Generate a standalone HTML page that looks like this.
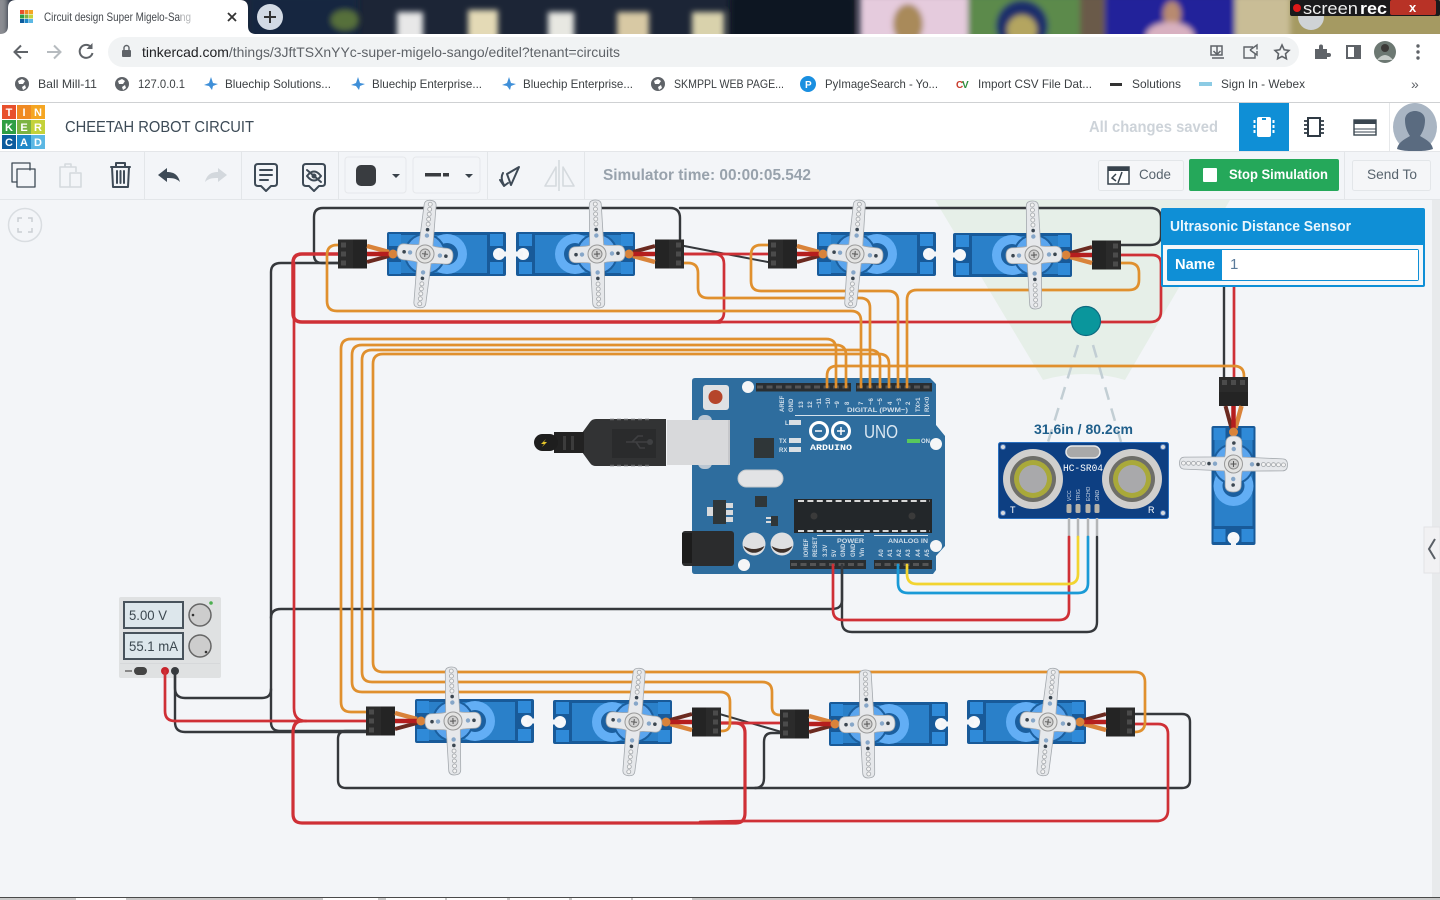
<!DOCTYPE html>
<html lang="en"><head><meta charset="utf-8"><title>Circuit design Super Migelo-Sango</title>
<style>
html,body{margin:0;padding:0;background:#f3f5f8;width:1440px;height:900px;overflow:hidden}
svg{display:block;font-family:"Liberation Sans",sans-serif}
.w{fill:none;stroke-linecap:round;stroke-linejoin:round}
.k{stroke:#35383c;stroke-width:2.4}
.r{stroke:#cf3036;stroke-width:2.7}
.o{stroke:#e0902e;stroke-width:2.7}
.ic{fill:none;stroke:#3e4a56;stroke-width:2;stroke-linejoin:round;stroke-linecap:round}
.lt{fill:none;stroke:#d5dade;stroke-width:1.6;stroke-linejoin:round}
.bm{font-size:12px;fill:#3c4043}
.pl{font-size:6px;fill:#cfdde9;font-weight:bold}
</style></head><body>
<svg width="1440" height="900" viewBox="0 0 1440 900" xmlns="http://www.w3.org/2000/svg">
<defs>
<filter id="bl" x="-30%" y="-30%" width="160%" height="160%"><feGaussianBlur stdDeviation="3"/></filter>
<clipPath id="topclip"><rect x="0" y="0" width="1440" height="34"/></clipPath>
<g id="conn">
  <rect x="-87" y="-14.5" width="29" height="29" fill="#2b2b2b"/>
  <rect x="-72" y="-14.5" width="14" height="29" fill="#242424"/>
  <rect x="-84" y="-11.500" width="5" height="5" fill="#4b4b4b"/>
  <rect x="-84" y="-2.500" width="5" height="5" fill="#4b4b4b"/>
  <rect x="-84" y="6.500" width="5" height="5" fill="#4b4b4b"/>
</g>
<g id="sb">
  <rect x="-38" y="-22" width="119" height="44" rx="2" fill="#185a99"/>
  <rect x="-24" y="-19" width="86" height="38" fill="#2a80c9"/>
  <circle cx="22" cy="0" r="20" fill="#62aef5"/>
  <circle cx="22" cy="0" r="11" fill="#1b5f9f"/>
  <circle cx="0" cy="0" r="21" fill="#1b5f9f"/>
  <circle cx="0" cy="0" r="19" fill="#5ba5ee"/>
  <rect x="-36" y="-20" width="12" height="12" fill="#2f8ad8"/>
  <rect x="-36" y="8" width="12" height="12" fill="#2f8ad8"/>
  <rect x="65" y="-20" width="13" height="12" fill="#2f8ad8"/>
  <rect x="65" y="8" width="13" height="12" fill="#2f8ad8"/>
  <circle cx="74" cy="0" r="6" fill="#f7f8fa"/>
  <rect x="74" y="-2.5" width="8" height="5" fill="#f3f5f8"/>
  <path d="M-58 -8 L-36 -2" stroke="#d9833a" stroke-width="4.500" fill="none"/>
  <path d="M-58 8 L-36 2" stroke="#6b2a20" stroke-width="4" fill="none"/>
  <path d="M-58 0 H-22" stroke="#b51e1e" stroke-width="4.500" fill="none"/>
  <circle cx="-32" cy="0" r="4.500" fill="#d9833a"/>
</g>
<g id="hn">
  <path d="M-7 -9 L-6 -49 Q-6 -54 0 -54 Q6 -54 6 -49 L7 -9 Q9 -8 21 -8 Q28 -8 28 0 Q28 8 21 8 Q9 8 7 9 L6 49 Q6 54 0 54 Q-6 54 -6 49 L-7 9 Q-9 8 -21 8 Q-28 8 -28 0 Q-28 -8 -21 -8 Q-9 -8 -7 -9Z" fill="#e6e8eb" stroke="#a4a9ae" stroke-width=".8"/>
  <g fill="#f2f2f2" stroke="#a2a6aa" stroke-width=".8">
    <circle cy="-50" r="2"/><circle cy="-45" r="2"/><circle cy="-40" r="2"/><circle cy="-35" r="2"/><circle cy="-30" r="2"/>
    <circle cy="50" r="2"/><circle cy="45" r="2"/><circle cy="40" r="2"/><circle cy="35" r="2"/><circle cy="30" r="2"/>
  </g>
  <circle cy="-24.5" r="1.800" fill="#3b4650"/><circle cy="-18.5" r="2.200" fill="#86a6c8"/>
  <circle cy="24.5" r="1.800" fill="#3b4650"/><circle cy="18.5" r="2.200" fill="#86a6c8"/>
  <circle cx="-21" r="1.800" fill="#3b4650"/><circle cx="-15" r="2.200" fill="#86a6c8"/>
  <circle cx="21" r="1.800" fill="#3b4650"/><circle cx="15" r="2.200" fill="#86a6c8"/>
  <circle r="9" fill="#e3e3e2" stroke="#999" stroke-width="1"/>
  <circle r="5" fill="#cfcfcf" stroke="#888" stroke-width="1"/>
  <path d="M-3 0H3M0 -3V3" stroke="#555" stroke-width="1"/>
</g>
</defs>

<!-- browser chrome -->
<rect width="1440" height="34" fill="#1c2536"/>
<g clip-path="url(#topclip)">
  <g filter="url(#bl)">
    <rect x="-6" y="-5" width="14" height="45" fill="#8b8d92"/>
    <rect x="248" y="-5" width="110" height="45" fill="#19263f"/>
    <ellipse cx="345" cy="20" rx="14" ry="10" fill="#56703a"/>
    <rect x="397" y="12" width="26" height="30" fill="#e8e8e8"/>
    <rect x="468" y="10" width="30" height="30" fill="#e4dab6"/>
    <rect x="548" y="12" width="26" height="30" fill="#e8e8e2"/>
    <rect x="617" y="12" width="32" height="30" fill="#d8c9a4"/>
    <rect x="692" y="12" width="32" height="30" fill="#d9d2ac"/>
    <rect x="730" y="-5" width="125" height="45" fill="#0e1522"/>
    <rect x="860" y="-5" width="110" height="45" fill="#e5cbdd"/>
    <ellipse cx="908" cy="24" rx="15" ry="20" fill="#a98a5a"/>
    <rect x="968" y="-5" width="112" height="45" fill="#5c8a4c"/>
    <circle cx="1022" cy="26" r="26" fill="#1f2d6a"/>
    <circle cx="1022" cy="30" r="15" fill="#b4a560"/>
    <rect x="1080" y="-5" width="28" height="45" fill="#6b5a4a"/>
    <rect x="1105" y="-5" width="130" height="45" fill="#20209a"/>
    <ellipse cx="1172" cy="14" rx="9" ry="13" fill="#b88a70"/>
    <ellipse cx="1170" cy="36" rx="24" ry="14" fill="#d8b0c0"/>
    <rect x="1235" y="-5" width="60" height="45" fill="#c9bd96"/>
    <rect x="1290" y="-5" width="160" height="45" fill="#a59a62"/>
  </g>
</g>
<circle cx="270" cy="17" r="13" fill="#d3dae4"/>
<path d="M264 17H276M270 11V23" stroke="#333" stroke-width="2"/>
<circle cx="1311" cy="17" r="13" fill="#cfd3d6"/>
<path d="M0 34 Q8 34 8 26 V8 Q8 0 16 0 H240 Q248 0 248 8 V26 Q248 34 256 34Z" fill="#fff"/>
<g>
 <rect x="20" y="10" width="4" height="4" fill="#e8502c"/><rect x="24.500" y="10" width="4" height="4" fill="#f08a22"/><rect x="29" y="10" width="4" height="4" fill="#f5a623"/>
 <rect x="20" y="14.500" width="4" height="4" fill="#2f9e44"/><rect x="24.500" y="14.500" width="4" height="4" fill="#7cb342"/><rect x="29" y="14.500" width="4" height="4" fill="#c4d23a"/>
 <rect x="20" y="19" width="4" height="4" fill="#0b5c9e"/><rect x="24.500" y="19" width="4" height="4" fill="#1e88c8"/><rect x="29" y="19" width="4" height="4" fill="#5cb8e4"/>
</g>
<text x="44" y="21" font-size="12" fill="#45494e" textLength="147" lengthAdjust="spacingAndGlyphs">Circuit design Super Migelo-Sang</text>
<rect x="181" y="6" width="14" height="22" fill="#fff" opacity=".6"/>
<path d="M228 13L236 21M236 13L228 21" stroke="#333" stroke-width="1.800"/>
<!-- screenrec -->
<rect x="1290" y="0" width="150" height="16" fill="#1a1a1c" rx="2"/>
<circle cx="1297" cy="8" r="4" fill="#e01818"/>
<text x="1303" y="14" font-size="17" fill="#eee" textLength="55" lengthAdjust="spacingAndGlyphs">screen</text>
<text x="1360" y="14" font-size="17" font-weight="bold" fill="#fff" textLength="27" lengthAdjust="spacingAndGlyphs">rec</text>
<rect x="1390" y="0" width="46" height="15" fill="#b83226" rx="2"/>
<text x="1409" y="12" font-size="13" font-weight="bold" fill="#fff">x</text>

<rect y="34" width="1440" height="36" fill="#fff"/>
<path d="M28 52H15M21 45.500L14.500 52L21 58.500" fill="none" stroke="#5f6368" stroke-width="2"/>
<path d="M47 52H60M54 45.500L60.500 52L54 58.500" fill="none" stroke="#b6bbbf" stroke-width="2"/>
<path d="M91 47A6.500 6.500 0 1 0 92.500 53" fill="none" stroke="#5f6368" stroke-width="2"/><path d="M92.500 43V49H86.500Z" fill="#5f6368"/>
<rect x="108" y="37" width="1191" height="30" rx="15" fill="#f1f3f4"/>
<rect x="122" y="50" width="9" height="7" rx="1" fill="#5f6368"/><path d="M124 50V48A2.500 2.500 0 0 1 129 48V50" fill="none" stroke="#5f6368" stroke-width="1.400"/>
<text x="142" y="57" font-size="14" fill="#202124" textLength="478" lengthAdjust="spacingAndGlyphs"><tspan>tinkercad.com</tspan><tspan fill="#5f6368">/things/3JftTSXnYYc-super-migelo-sango/editel?tenant=circuits</tspan></text>
<path d="M1211 46H1222V55H1211ZM1217 46V54M1213.500 51L1217 54.500L1220.500 51M1212 58H1224" fill="none" stroke="#5f6368" stroke-width="1.500"/>
<path d="M1250 50L1257 45V49.500M1250 50L1257 55V51M1253 47H1244V58H1255V54" fill="none" stroke="#5f6368" stroke-width="1.400"/>
<path d="M1282 45L1284.200 49.800L1289 50.400L1285.500 53.800L1286.400 58.800L1282 56.400L1277.600 58.800L1278.500 53.800L1275 50.400L1279.800 49.800Z" fill="none" stroke="#5f6368" stroke-width="1.600"/>
<path d="M1315 49H1319V46.500A2 2 0 0 1 1323 46.500V49H1327V53H1329A2 2 0 0 1 1329 57H1327V59H1315Z" fill="#5f6368"/>
<rect x="1347" y="46" width="13" height="12" fill="none" stroke="#5f6368" stroke-width="2"/><rect x="1354" y="46" width="6" height="12" fill="#5f6368"/>
<circle cx="1385" cy="52" r="11" fill="#6c7872"/><circle cx="1385" cy="48" r="4" fill="#3c3a38"/><path d="M1377 60Q1385 50 1393 60Z" fill="#c7cdc9"/>
<circle cx="1418" cy="46" r="1.700" fill="#5f6368"/><circle cx="1418" cy="52" r="1.700" fill="#5f6368"/><circle cx="1418" cy="58" r="1.700" fill="#5f6368"/>

<rect y="70" width="1440" height="32" fill="#fff"/><rect y="102" width="1440" height="1" fill="#cfd1d3"/>
<g fill="#5f6368"><circle cx="22" cy="84" r="7"/><circle cx="122" cy="84" r="7"/><circle cx="658" cy="84" r="7"/></g>
<g fill="#fff"><path d="M18 81L22 79L25 81L23 84L19 84ZM22 87L25 85L26 88L23 90Z"/><path d="M118 81L122 79L125 81L123 84L119 84ZM122 87L125 85L126 88L123 90Z"/><path d="M654 81L658 79L661 81L659 84L655 84ZM658 87L661 85L662 88L659 90Z"/></g>
<g fill="#3f8fd8"><path d="M211 77L213 83L218 84L213 86L212 90L209 86L204 85L209 83Z"/><path d="M358 77L360 83L365 84L360 86L359 90L356 86L351 85L356 83Z"/><path d="M509 77L511 83L516 84L511 86L510 90L507 86L502 85L507 83Z"/></g>
<circle cx="808" cy="84" r="8" fill="#1a8fe0"/><text x="805" y="88" font-size="10" font-weight="bold" fill="#fff">P</text>
<text x="956" y="88" font-size="10" font-weight="bold" fill="#c83c2c">C</text><text x="962" y="88" font-size="10" font-weight="bold" fill="#2f8f3f">V</text>
<rect x="1110" y="83" width="12" height="3" fill="#333"/>
<rect x="1199" y="82" width="13" height="4" fill="#8ccbe4"/>
<text class="bm" x="38" y="88" textLength="59" lengthAdjust="spacingAndGlyphs">Ball Mill-11</text>
<text class="bm" x="138" y="88" textLength="47" lengthAdjust="spacingAndGlyphs">127.0.0.1</text>
<text class="bm" x="225" y="88" textLength="106" lengthAdjust="spacingAndGlyphs">Bluechip Solutions...</text>
<text class="bm" x="372" y="88" textLength="110" lengthAdjust="spacingAndGlyphs">Bluechip Enterprise...</text>
<text class="bm" x="523" y="88" textLength="110" lengthAdjust="spacingAndGlyphs">Bluechip Enterprise...</text>
<text class="bm" x="674" y="88" textLength="110" lengthAdjust="spacingAndGlyphs">SKMPPL WEB PAGE...</text>
<text class="bm" x="825" y="88" textLength="113" lengthAdjust="spacingAndGlyphs">PyImageSearch - Yo...</text>
<text class="bm" x="978" y="88" textLength="114" lengthAdjust="spacingAndGlyphs">Import CSV File Dat...</text>
<text class="bm" x="1132" y="88" textLength="49" lengthAdjust="spacingAndGlyphs">Solutions</text>
<text class="bm" x="1221" y="88" textLength="84" lengthAdjust="spacingAndGlyphs">Sign In - Webex</text>
<text x="1411" y="89" font-size="14" fill="#5f6368">»</text>

<!-- Tinkercad header -->
<rect y="103" width="1440" height="48" fill="#fff"/>
<g font-size="11" font-weight="bold" fill="#fff" text-anchor="middle">
 <rect x="2" y="105" width="14" height="14" fill="#e8502c"/><text x="9" y="116">T</text>
 <rect x="17" y="105" width="14" height="14" fill="#f08a22"/><text x="24" y="116">I</text>
 <rect x="31" y="105" width="14" height="14" fill="#f5a623"/><text x="38" y="116">N</text>
 <rect x="2" y="120" width="14" height="14" fill="#2f9e44"/><text x="9" y="131">K</text>
 <rect x="17" y="120" width="14" height="14" fill="#7cb342"/><text x="24" y="131">E</text>
 <rect x="31" y="120" width="14" height="14" fill="#c4d23a"/><text x="38" y="131">R</text>
 <rect x="2" y="135" width="14" height="14" fill="#0b5c9e"/><text x="9" y="146">C</text>
 <rect x="17" y="135" width="14" height="14" fill="#1e88c8"/><text x="24" y="146">A</text>
 <rect x="31" y="135" width="14" height="14" fill="#5cb8e4"/><text x="38" y="146">D</text>
</g>
<text x="65" y="132" font-size="16" fill="#3c4a56" textLength="189" lengthAdjust="spacingAndGlyphs">CHEETAH ROBOT CIRCUIT</text>
<text x="1089" y="132" font-size="16" font-weight="bold" fill="#cdd3d9" textLength="129" lengthAdjust="spacingAndGlyphs">All changes saved</text>
<rect x="1239" y="103" width="50" height="48" fill="#0f8fd6"/>
<rect x="1257" y="117" width="14" height="20" rx="2" fill="#fff"/>
<path d="M1254.500 120V134M1273.500 120V134" stroke="#fff" stroke-width="2" stroke-dasharray="3 2"/>
<rect x="1262" y="118" width="4" height="2" fill="#0f8fd6"/>
<rect x="1308" y="118" width="12" height="18" fill="none" stroke="#2f3a44" stroke-width="2"/>
<path d="M1304 121H1308M1304 125H1308M1304 129H1308M1304 133H1308M1320 121H1324M1320 125H1324M1320 129H1324M1320 133H1324" stroke="#2f3a44" stroke-width="1.800"/>
<rect x="1354" y="120" width="22" height="15" fill="#fff" stroke="#3a4650" stroke-width="1.400"/><rect x="1354" y="120" width="22" height="4" fill="#3a4650"/>
<path d="M1354 129H1376M1354 132H1376" stroke="#3a4650"/>
<rect x="1389" y="103" width="1" height="48" fill="#e6e8ea"/>
<ellipse cx="1415" cy="127" rx="22" ry="24" fill="#a9b5c3"/>
<path d="M1405 120C1405 108 1425 108 1425 120C1425 128 1422 133 1420 136C1427 140 1432 143 1433 149C1425 152 1405 152 1397 149C1398 143 1403 140 1410 136C1408 133 1405 128 1405 120Z" fill="#5a6b80"/>

<!-- toolbar -->
<rect y="151" width="1440" height="48" fill="#f3f5f8"/><rect y="151" width="1440" height="1" fill="#e4e6e9"/><rect y="199" width="1440" height="1" fill="#e3e6e9"/>
<g fill="#e3e6e9"><rect x="144" y="152" width="1" height="47"/><rect x="241" y="152" width="1" height="47"/><rect x="338" y="152" width="1" height="47"/><rect x="487" y="152" width="1" height="47"/><rect x="584" y="152" width="1" height="47"/><rect x="1344" y="152" width="1" height="47"/></g>
<path class="ic" style="stroke-width:1.300" d="M17 182H12V163H30V170"/><rect class="ic" style="stroke-width:1.300" x="17" y="169" width="18" height="18"/>
<path class="lt" d="M76 172V167H60V187H70M65 167V164H71V167"/><rect class="lt" x="70" y="173" width="11" height="14"/>
<path class="ic" d="M111 167H130M116 167V163H125V167M112 167L113 187H128L129 167M117 171V183M120.500 171V183M124 171V183"/>
<path d="M158 175L167 168V172C173 172 178 174 180 182C176 178 172 178 167 178V182Z" fill="#3e4a56"/>
<path d="M227 175L218 168V172C212 172 207 174 205 182C209 178 213 178 218 178V182Z" fill="#d3d8dd"/>
<path class="ic" d="M258 164H274Q277 164 277 167V183Q277 186 274 186H271L266 191L261 186H258Q255 186 255 183V167Q255 164 258 164ZM260 170H272M260 175H272M260 180H268"/>
<path class="ic" d="M306 164H322Q325 164 325 167V183Q325 186 322 186H319L314 191L309 186H306Q303 186 303 183V167Q303 164 306 164ZM307 170L321 182M307 176Q314 167 321 176Q314 185 307 176Z"/>
<circle cx="314" cy="176" r="2.500" fill="#3e4a56"/>
<rect x="345" y="157" width="61" height="36" rx="3" fill="none" stroke="#e6e8eb"/>
<rect x="356" y="165" width="20" height="21" rx="5" fill="#393c40"/><path d="M392 174H400L396 178Z" fill="#39424a"/>
<rect x="413" y="157" width="67" height="36" rx="3" fill="none" stroke="#e6e8eb"/>
<rect x="425" y="173" width="16" height="3.500" fill="#393c40"/><rect x="443" y="173" width="6" height="3.500" fill="#393c40"/><path d="M465 174H473L469 178Z" fill="#39424a"/>
<path class="ic" d="M519 167L507 174L511 185L519 167ZM503 173Q500 178 504 185M500 180L504 186L508 183"/>
<path class="lt" d="M559 160V191M556 167L545 186H556ZM563 167L574 186H563Z"/>
<text x="603" y="180" font-size="16" font-weight="bold" fill="#98a2ac" textLength="208" lengthAdjust="spacingAndGlyphs">Simulator time: 00:00:05.542</text>
<rect x="1098.500" y="160.500" width="85" height="30" rx="2" fill="#f5f6f8" stroke="#e3e6e9"/>
<rect x="1108" y="167" width="21" height="17" fill="#fff" stroke="#37424c" stroke-width="1.500"/><rect x="1108" y="167" width="21" height="4" fill="#37424c"/>
<path d="M1116 174L1112 178L1116 181M1122 172L1118 183" fill="none" stroke="#37424c" stroke-width="1.500"/>
<text x="1139" y="179" font-size="14" fill="#58646e" textLength="32" lengthAdjust="spacingAndGlyphs">Code</text>
<rect x="1189" y="159" width="150" height="32" rx="2" fill="#25a85a"/>
<rect x="1203" y="168" width="14" height="14" rx="1" fill="#fff"/>
<text x="1229" y="179" font-size="14" font-weight="bold" fill="#fff" textLength="99" lengthAdjust="spacingAndGlyphs">Stop Simulation</text>
<rect x="1352.500" y="160.500" width="78" height="30" rx="2" fill="#f5f6f8" stroke="#e3e6e9"/>
<text x="1367" y="179" font-size="14" fill="#58646e" textLength="50" lengthAdjust="spacingAndGlyphs">Send To</text>

<!-- canvas -->
<rect y="200" width="1440" height="697" fill="#f3f5f8"/>
<rect x="1432" y="200" width="8" height="697" fill="#e8eaec"/>
<rect y="897" width="1440" height="1" fill="#4a4a4a"/><rect y="898" width="1440" height="2" fill="#c8c8c8"/>
<g fill="#fff"><rect x="76" y="898" width="50" height="2"/><rect x="323" y="898" width="55" height="2"/><rect x="386" y="898" width="59" height="2"/><rect x="447" y="898" width="60" height="2"/><rect x="510" y="898" width="59" height="2"/><rect x="572" y="898" width="59" height="2"/><rect x="633" y="898" width="59" height="2"/></g>
<rect x="1424" y="527" width="16" height="46" fill="#f1f1f3" stroke="#e2e3e6"/>
<path d="M1435 539L1429 549L1435 559" fill="none" stroke="#5a5f66" stroke-width="2"/>
<circle cx="25" cy="225" r="16.500" fill="none" stroke="#d9dde1" stroke-width="1.500"/>
<path d="M18 222V218H22M28 218H32V222M32 228V232H28M22 232H18V228" fill="none" stroke="#c9ced3" stroke-width="1.500"/>

<!-- FOV -->
<path d="M935 200H1230L1125 380Q1085 368 1043 380Z" fill="#e6efe8"/>
<path d="M1078 345L1048 442M1093 345L1121 442" fill="none" stroke="#c2ced4" stroke-width="2.500" stroke-dasharray="13 9"/>

<!-- Arduino -->
<path d="M695 378H930L936 384V425L945 436V546L936 556V570L933 574H695Q692 574 692 571V381Q692 378 695 378Z" fill="#2e6d9e"/>
<rect x="756" y="383" width="95" height="8.500" fill="#2a2e30"/><rect x="856" y="383" width="76" height="8.500" fill="#2a2e30"/>
<rect x="790" y="560" width="76" height="9" fill="#2a2e30"/><rect x="874" y="560" width="58" height="9" fill="#2a2e30"/>
<path d="M757 387H851M857 387H932M791 564.500H866M875 564.500H932" stroke="#555" stroke-width="3" stroke-dasharray="6 3.500"/>
<g fill="#f5f6f7"><circle cx="748" cy="387" r="6"/><circle cx="936" cy="444" r="6"/><circle cx="936" cy="546" r="6"/><circle cx="744" cy="565" r="6"/></g>
<rect x="703" y="385" width="26" height="25" rx="3" fill="#dfe1e3"/><circle cx="715.500" cy="397" r="7" fill="#b5452a"/>
<g fill="#2f3638"><rect x="754" y="438" width="20" height="20"/><rect x="755" y="496" width="12" height="11"/><rect x="713" y="500" width="13" height="24"/><rect x="771" y="516" width="7" height="10"/></g>
<g fill="#d8dadc"><rect x="726" y="503" width="7" height="5"/><rect x="726" y="510" width="7" height="5"/><rect x="726" y="517" width="7" height="5"/><rect x="707" y="507" width="6" height="9"/><rect x="766" y="517" width="5" height="2"/><rect x="766" y="521" width="5" height="2"/></g>
<rect x="738" y="470" width="45" height="17" rx="8.500" fill="#e2e3e5" stroke="#c3c7cb"/>
<rect x="794" y="499" width="138" height="34" fill="#23272a"/>
<path d="M798 501H930M798 531H930" stroke="#d8d8d8" stroke-width="2" stroke-dasharray="6 3.400"/>
<circle cx="814" cy="516" r="3.500" fill="#3a3a3a"/><circle cx="912" cy="516" r="3.500" fill="#3a3a3a"/>
<rect x="682" y="531" width="52" height="35" rx="3" fill="#2b2c2d"/><rect x="682" y="533" width="10" height="30" fill="#1c1c1c"/>
<circle cx="754" cy="544" r="11.500" fill="#dfe0e2"/><path d="M743.500 546A11.500 11.500 0 0 0 764.500 546Q754 552 743.500 546Z" fill="#3d302a"/>
<circle cx="782" cy="544" r="11.500" fill="#dfe0e2"/><path d="M771.500 546A11.500 11.500 0 0 0 792.500 546Q782 552 771.500 546Z" fill="#3d302a"/>
<g fill="none" stroke="#fff" stroke-width="3"><circle cx="819" cy="431" r="8.500"/><circle cx="841" cy="431" r="8.500"/></g>
<path d="M815 431H822M837 431H845M841 427V435" stroke="#fff" stroke-width="1.500"/>
<text x="810" y="450" font-size="8.500" font-weight="bold" fill="#fff" textLength="42" lengthAdjust="spacingAndGlyphs" style="font-family:'Liberation Mono',monospace">ARDUINO</text>
<text x="864" y="438" font-size="18" fill="#dce8f2" textLength="34" lengthAdjust="spacingAndGlyphs">UNO</text>
<g fill="#d9dfe4"><rect x="789" y="420" width="12" height="5"/><rect x="789" y="438" width="12" height="5"/><rect x="789" y="447" width="12" height="5"/></g>
<g font-size="6" fill="#d5e2ec" font-weight="bold"><text x="785" y="425">L</text><text x="779" y="443">TX</text><text x="779" y="452">RX</text><text x="921" y="443">ON</text></g>
<rect x="907" y="439" width="13" height="4" fill="#58c85c"/>
<path d="M795 415.500H930M817 535.500H864M874 535.500H928" stroke="#d5e2ec" stroke-width="1"/>
<text x="847" y="412" class="pl" textLength="61" lengthAdjust="spacingAndGlyphs">DIGITAL (PWM~)</text>
<text x="837" y="543" class="pl" textLength="27" lengthAdjust="spacingAndGlyphs">POWER</text>
<text x="888" y="543" class="pl" textLength="40" lengthAdjust="spacingAndGlyphs">ANALOG IN</text>
<text class="pl" transform="translate(784 412) rotate(-90)">AREF</text>
<text class="pl" transform="translate(793 412) rotate(-90)">GND</text>
<text class="pl" transform="translate(803 408) rotate(-90)">13</text>
<text class="pl" transform="translate(812 408) rotate(-90)">12</text>
<text class="pl" transform="translate(821 408) rotate(-90)">~11</text>
<text class="pl" transform="translate(830 408) rotate(-90)">~10</text>
<text class="pl" transform="translate(839 408) rotate(-90)">~9</text>
<text class="pl" transform="translate(849 405) rotate(-90)">8</text>
<text class="pl" transform="translate(863 405) rotate(-90)">7</text>
<text class="pl" transform="translate(873 405) rotate(-90)">~6</text>
<text class="pl" transform="translate(882 405) rotate(-90)">~5</text>
<text class="pl" transform="translate(892 405) rotate(-90)">4</text>
<text class="pl" transform="translate(901 405) rotate(-90)">~3</text>
<text class="pl" transform="translate(910 405) rotate(-90)">2</text>
<text class="pl" transform="translate(920 412) rotate(-90)">TX&gt;1</text>
<text class="pl" transform="translate(929 412) rotate(-90)">RX&lt;0</text>
<text class="pl" transform="translate(808 557) rotate(-90)">IOREF</text>
<text class="pl" transform="translate(817 557) rotate(-90)">RESET</text>
<text class="pl" transform="translate(827 557) rotate(-90)">3.3V</text>
<text class="pl" transform="translate(836 557) rotate(-90)">5V</text>
<text class="pl" transform="translate(845 557) rotate(-90)">GND</text>
<text class="pl" transform="translate(855 557) rotate(-90)">GND</text>
<text class="pl" transform="translate(864 557) rotate(-90)">Vin</text>
<text class="pl" transform="translate(883 557) rotate(-90)">A0</text>
<text class="pl" transform="translate(892 557) rotate(-90)">A1</text>
<text class="pl" transform="translate(901 557) rotate(-90)">A2</text>
<text class="pl" transform="translate(910 557) rotate(-90)">A3</text>
<text class="pl" transform="translate(920 557) rotate(-90)">A4</text>
<text class="pl" transform="translate(929 557) rotate(-90)">A5</text>
<!-- USB -->
<rect x="698" y="415" width="14" height="54" rx="6" fill="#b9c6d2"/>
<rect x="667" y="420" width="63" height="45" fill="#d8d9db"/><rect x="728" y="420" width="2" height="45" fill="#c6c7ca"/>
<path d="M582 433L590 422Q592 419 596 419H666V466H596Q592 466 590 463L582 452Z" fill="#323334"/>
<rect x="612" y="429" width="44" height="29" fill="#2a2b2c"/>
<path d="M626 442H652M632 442L638 436H643M636 442L640 448H645" stroke="#3f4042" stroke-width="1.600" fill="none"/><circle cx="650" cy="442" r="3" fill="#3f4042"/>
<path d="M610 419.500H650M610 465.500H650" stroke="#636466" stroke-width="1.500" stroke-dasharray="4 3"/>
<rect x="554" y="432" width="30" height="21" fill="#222"/><rect x="563" y="436" width="3" height="14" fill="#3c3c3c"/><rect x="571" y="436" width="3" height="14" fill="#3c3c3c"/>
<rect x="534" y="434" width="24" height="17" rx="8.500" fill="#1e1e1e"/>
<path d="M546 439L541 444H544L542 447L547 442H544Z" fill="#e6c62a"/>

<!-- Ultrasonic sensor -->
<text x="1034" y="434" font-size="14" font-weight="bold" fill="#1f5f8b" textLength="99" lengthAdjust="spacingAndGlyphs">31.6in / 80.2cm</text>
<rect x="998.500" y="442.500" width="170" height="76" rx="2" fill="#0d3f82" stroke="#2a70c0"/>
<g fill="#d7dadd" stroke="#4a7ac0"><circle cx="1003" cy="447" r="2.500"/><circle cx="1163" cy="447" r="2.500"/><circle cx="1003" cy="513" r="2.500"/><circle cx="1163" cy="513" r="2.500"/></g>
<g><circle cx="1033" cy="479" r="30" fill="#d0cfcd"/><circle cx="1033" cy="479" r="23" fill="#6e6e68"/><circle cx="1033" cy="479" r="19" fill="#a9a93a"/><circle cx="1033" cy="479" r="14" fill="#a9a9ab"/>
<circle cx="1132" cy="479" r="30" fill="#d0cfcd"/><circle cx="1132" cy="479" r="23" fill="#6e6e68"/><circle cx="1132" cy="479" r="19" fill="#a9a93a"/><circle cx="1132" cy="479" r="14" fill="#a9a9ab"/></g>
<rect x="1066" y="446" width="34" height="12" rx="6" fill="#a9a9a9" stroke="#e8e8e8" stroke-width="1.500"/>
<text x="1063" y="471" font-size="10" fill="#fff" textLength="40" lengthAdjust="spacingAndGlyphs" style="font-family:'Liberation Mono',monospace">HC-SR04</text>
<text x="1010" y="513" font-size="9" fill="#fff">T</text><text x="1148" y="513" font-size="9" fill="#fff">R</text>
<g font-size="5" fill="#cfd8e6"><text transform="translate(1071 501) rotate(-90)">VCC</text><text transform="translate(1080 501) rotate(-90)">TRIG</text><text transform="translate(1090 501) rotate(-90)">ECHO</text><text transform="translate(1099 501) rotate(-90)">GND</text></g>
<g fill="#b5b2aa"><rect x="1066.500" y="504" width="5" height="9" rx="1.500"/><rect x="1075.500" y="504" width="5" height="9" rx="1.500"/><rect x="1085.500" y="504" width="5" height="9" rx="1.500"/><rect x="1094.500" y="504" width="5" height="9" rx="1.500"/></g>
<path d="M1069 518V537M1078 518V537M1088 518V537M1097 518V537" stroke="#b4b6b8" stroke-width="2.500"/>

<!-- Power supply -->
<rect x="119" y="597" width="102" height="81" rx="2" fill="#dfe1e2"/>
<rect x="120" y="663" width="100" height="1" fill="#d6d8da"/>
<rect x="124" y="602" width="59" height="26" fill="#dde7ec" stroke="#48535c" stroke-width="2"/>
<rect x="124" y="633" width="59" height="26" fill="#dde7ec" stroke="#48535c" stroke-width="2"/>
<text x="129" y="620" font-size="14" fill="#3c4850" textLength="38" lengthAdjust="spacingAndGlyphs">5.00 V</text>
<text x="129" y="651" font-size="14" fill="#3c4850" textLength="49" lengthAdjust="spacingAndGlyphs">55.1 mA</text>
<circle cx="200" cy="615" r="11" fill="#cdcdcd" stroke="#666" stroke-width="1.500"/><circle cx="193" cy="615" r="1.300" fill="#333"/>
<circle cx="200" cy="646" r="11" fill="#cdcdcd" stroke="#666" stroke-width="1.500"/><circle cx="206" cy="652" r="1.300" fill="#333"/>
<circle cx="211" cy="603" r="1.800" fill="#4caf50"/>
<rect x="134" y="667" width="13" height="8" rx="4" fill="#444"/><rect x="125" y="670" width="7" height="2" fill="#888"/>
<circle cx="165" cy="671" r="4" fill="#c8242c"/><circle cx="175" cy="671" r="4" fill="#383b3e"/>

<!-- wires -->
<g class="w k">
 <path d="M345 263H322Q314 263 314 255V217Q314 208 323 208H670Q680 208 680 218V245"/>
 <path d="M680 208H1150Q1161 208 1161 218V235Q1161 245 1150 245H1116"/>
 <path d="M679 245L773 263" stroke-width="2"/>
 <path d="M345 263H281Q271 263 271 272V722Q271 731 280 731H371"/>
 <path d="M175 671V688Q175 698 185 698H262Q271 698 271 689"/>
 <path d="M175 671V722Q175 732 185 732H371"/>
 <path d="M271 618Q271 609 281 609H832Q842 609 842 600V565"/>
 <path d="M842 565V622Q842 632 852 632H1087Q1097 632 1097 622V537"/>
 <path d="M371 731H346Q338 731 338 739V780Q338 788 346 788H1182Q1190 788 1190 780V722Q1190 714 1182 714H1130"/>
 <path d="M755 788Q764 788 764 778V742Q764 733 772 733H785"/>
 <path d="M716 713L785 733" stroke-width="2"/>
 <path d="M1224 285V382"/>
</g>
<g class="w r">
 <path d="M345 254H302Q293 254 293 263V313Q293 322 302 322H720" style="stroke-width:3.500"/>
 <path d="M720 322H1150Q1161 322 1161 311V264Q1161 255 1152 255H1116"/>
 <path d="M294 263V708Q294 721 306 721"/>
 <path d="M679 254H714Q724 254 724 264V312Q724 322 714 322"/>
 <path d="M679 254H773"/>
 <path d="M165 671V711Q165 721 175 721H371"/>
 <path d="M302 721Q293 721 293 733V814Q293 823 302 823H736Q745 823 745 813V733Q745 723 735 723H716" style="stroke-width:3.200"/>
 <path d="M700 822L745 821H1158Q1168 820 1168 810V734Q1168 724 1158 724H1130"/>
 <path d="M716 723H785"/>
 <path d="M833 565V610Q833 620 843 620H1059Q1069 620 1069 610V537"/>
 <path d="M1234 285V382"/>
</g>
<path class="w" stroke="#f2d430" stroke-width="2.700" d="M907 565V574Q907 584 917 584H1068Q1078 584 1078 574V537"/>
<path class="w" stroke="#1a9ad6" stroke-width="2.700" d="M898 565V583Q898 593 908 593H1078Q1088 593 1088 583V537"/>
<g class="w o">
 <path d="M345 245H337Q327 245 327 255V301Q327 311 337 311H851Q861 311 861 321V387"/>
 <path d="M679 263H688Q698 263 698 273V288Q698 298 708 298H860Q870 298 870 308V387"/>
 <path d="M773 245H761Q751 245 751 255V281Q751 291 761 291H888Q898 291 898 301V387"/>
 <path d="M1116 263H1129Q1139 263 1139 273V280Q1139 290 1129 290H917Q907 290 907 300V387"/>
 <path d="M371 712H351Q341 712 341 702V349Q341 339 351 339H826Q836 339 836 349V387"/>
 <path d="M716 731H722Q730 731 730 723V702Q730 692 720 692H362Q352 692 352 682V355Q352 345 362 345H836Q846 345 846 355V387"/>
 <path d="M785 715H780Q772 715 772 707V692Q772 682 762 682H372Q362 682 362 672V360Q362 350 372 350H870Q880 350 880 360V387"/>
 <path d="M1130 732H1135Q1145 732 1145 722V682Q1145 672 1135 672H383Q373 672 373 662V364Q373 354 383 354H879Q889 354 889 364V387"/>
 <path d="M827 387V376Q827 366 837 366H1234Q1244 366 1244 376V382"/>
</g>

<!-- connectors over wire ends -->
<use href="#conn" transform="translate(425 254)"/>
<use href="#conn" transform="translate(597 254) rotate(180)"/>
<use href="#conn" transform="translate(855 254)"/>
<use href="#conn" transform="translate(1034 255) rotate(180)"/>
<use href="#conn" transform="translate(453 721)"/>
<use href="#conn" transform="translate(634 722) rotate(180)"/>
<use href="#conn" transform="translate(867 724)"/>
<use href="#conn" transform="translate(1048 722) rotate(180)"/>
<use href="#conn" transform="translate(1233.500 464) rotate(90)"/>

<!-- servos -->
<g transform="translate(425 254)"><use href="#sb"/><use href="#hn" transform="rotate(6)"/></g>
<g transform="translate(597 254)"><use href="#sb" transform="rotate(180)"/><use href="#hn" transform="rotate(-2)"/></g>
<g transform="translate(855 254)"><use href="#sb"/><use href="#hn" transform="rotate(5)"/></g>
<g transform="translate(1034 255)"><use href="#sb" transform="rotate(180)"/><use href="#hn" transform="rotate(-2)"/></g>
<g transform="translate(453 721)"><use href="#sb"/><use href="#hn" transform="rotate(-2)"/></g>
<g transform="translate(634 722)"><use href="#sb" transform="rotate(180)"/><use href="#hn" transform="rotate(6)"/></g>
<g transform="translate(867 724)"><use href="#sb"/><use href="#hn" transform="rotate(-2)"/></g>
<g transform="translate(1048 722)"><use href="#sb" transform="rotate(180)"/><use href="#hn" transform="rotate(6)"/></g>
<g transform="translate(1233.500 464)"><use href="#sb" transform="rotate(90)"/><use href="#hn" transform="rotate(91)"/></g>

<circle cx="1086" cy="321" r="14.500" fill="#0a969c" stroke="#0e6a80" stroke-width="1.200"/>

<!-- Properties panel -->
<rect x="1161" y="208" width="264" height="79" rx="2" fill="#0f8fd6"/>
<rect x="1163" y="245" width="260" height="40" fill="#f5f7f9"/>
<rect x="1167" y="249" width="252" height="32" rx="2" fill="#0f8fd6"/>
<rect x="1222" y="250" width="196" height="30" fill="#fff"/>
<text x="1170" y="231" font-size="15" font-weight="bold" fill="#eaf6fd" textLength="181" lengthAdjust="spacingAndGlyphs">Ultrasonic Distance Sensor</text>
<text x="1175" y="269" font-size="15" font-weight="bold" fill="#fff" textLength="40" lengthAdjust="spacingAndGlyphs">Name</text>
<text x="1230" y="269" font-size="15" fill="#5a7a9a">1</text>
</svg>
</body></html>
